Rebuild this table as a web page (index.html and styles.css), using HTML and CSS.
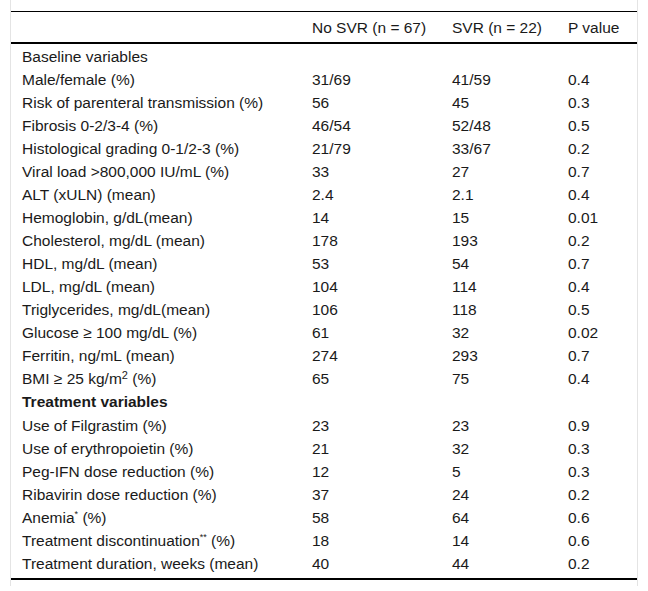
FILE: index.html
```html
<!DOCTYPE html>
<html>
<head>
<meta charset="utf-8">
<link rel="stylesheet" href="styles.css">
</head>
<body>
<div class="frame">
<table class="data">
<colgroup>
<col class="c1"><col class="c2"><col class="c3"><col class="c4">
</colgroup>
<thead>
<tr><th></th><th>No SVR (n = 67)</th><th>SVR (n = 22)</th><th>P value</th></tr>
</thead>
<tbody>
<tr class="first"><td>Baseline variables</td><td></td><td></td><td></td></tr>
<tr><td>Male/female (%)</td><td>31/69</td><td>41/59</td><td>0.4</td></tr>
<tr><td>Risk of parenteral transmission (%)</td><td>56</td><td>45</td><td>0.3</td></tr>
<tr><td>Fibrosis 0-2/3-4 (%)</td><td>46/54</td><td>52/48</td><td>0.5</td></tr>
<tr><td>Histological grading 0-1/2-3 (%)</td><td>21/79</td><td>33/67</td><td>0.2</td></tr>
<tr><td>Viral load &gt;800,000 IU/mL (%)</td><td>33</td><td>27</td><td>0.7</td></tr>
<tr><td>ALT (xULN) (mean)</td><td>2.4</td><td>2.1</td><td>0.4</td></tr>
<tr><td>Hemoglobin, g/dL(mean)</td><td>14</td><td>15</td><td>0.01</td></tr>
<tr><td>Cholesterol, mg/dL (mean)</td><td>178</td><td>193</td><td>0.2</td></tr>
<tr><td>HDL, mg/dL (mean)</td><td>53</td><td>54</td><td>0.7</td></tr>
<tr><td>LDL, mg/dL (mean)</td><td>104</td><td>114</td><td>0.4</td></tr>
<tr><td>Triglycerides, mg/dL(mean)</td><td>106</td><td>118</td><td>0.5</td></tr>
<tr><td>Glucose ≥ 100 mg/dL (%)</td><td>61</td><td>32</td><td>0.02</td></tr>
<tr><td>Ferritin, ng/mL (mean)</td><td>274</td><td>293</td><td>0.7</td></tr>
<tr><td>BMI ≥ 25 kg/m<sup class="sq">2</sup> (%)</td><td>65</td><td>75</td><td>0.4</td></tr>
<tr class="section"><td class="strong">Treatment variables</td><td></td><td></td><td></td></tr>
<tr><td>Use of Filgrastim (%)</td><td>23</td><td>23</td><td>0.9</td></tr>
<tr><td>Use of erythropoietin (%)</td><td>21</td><td>32</td><td>0.3</td></tr>
<tr><td>Peg-IFN dose reduction (%)</td><td>12</td><td>5</td><td>0.3</td></tr>
<tr><td>Ribavirin dose reduction (%)</td><td>37</td><td>24</td><td>0.2</td></tr>
<tr><td>Anemia<sup class="note">*</sup> (%)</td><td>58</td><td>64</td><td>0.6</td></tr>
<tr><td>Treatment discontinuation<sup class="note">**</sup> (%)</td><td>18</td><td>14</td><td>0.6</td></tr>
<tr class="last"><td>Treatment duration, weeks (mean)</td><td>40</td><td>44</td><td>0.2</td></tr>
</tbody>
</table>
</div>
</body>
</html>
```

FILE: styles.css
```css
html, body {
  margin: 0;
  padding: 0;
  background: #fff;
}
body {
  font-family: "Liberation Sans", Arial, sans-serif;
  font-size: 15.5px;
  color: #1a1a1a;
}
.frame {
  margin-left: 10px;
  width: 626px;
  border-left: 1px solid #e4e4e4;
  border-right: 1px solid #e4e4e4;
  padding-top: 11px;
  padding-bottom: 6px;
}
.data {
  width: 626px;
  border-collapse: collapse;
  table-layout: fixed;
  border-top: 1px solid #000;
  border-bottom: 2px solid #000;
}
.c1 { width: 290px; }
.c2 { width: 140px; }
.c3 { width: 116px; }
.c4 { width: 80px; }
.data th {
  font-weight: normal;
  text-align: left;
  height: 30px;
  padding: 0 0 0 11px;
  line-height: 17px;
  vertical-align: middle;
  border-bottom: 2px solid #000;
}
.data td {
  padding: 3px 0 3px 11px;
  line-height: 17px;
  height: 17px;
  text-align: left;
  vertical-align: middle;
  white-space: nowrap;
}
.data td.strong {
  font-weight: bold;
}
.data .first td {
  padding-top: 4px;
}
.data .section td {
  padding-bottom: 4px;
}
.data .last td {
  padding-bottom: 6px;
}
.sq {
  font-size: 11px;
  line-height: 0;
  vertical-align: 5px;
}
.note {
  font-size: 9px;
  line-height: 0;
  vertical-align: 6px;
}
```
